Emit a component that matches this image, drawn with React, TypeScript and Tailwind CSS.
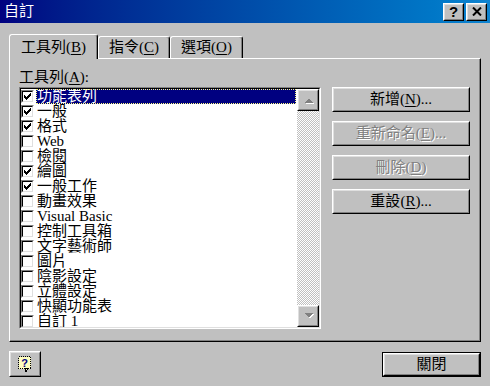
import type { ReactNode } from "react";

const items: [string, boolean][] = [
  ["功能表列", true],
  ["一般", true],
  ["格式", true],
  ["Web", false],
  ["檢閱", false],
  ["繪圖", true],
  ["一般工作", true],
  ["動畫效果", false],
  ["Visual Basic", false],
  ["控制工具箱", false],
  ["文字藝術師", false],
  ["圖片", false],
  ["陰影設定", false],
  ["立體設定", false],
  ["快顯功能表", false],
  ["自訂 1", false],
];

// classic raised bevel: two nested 1px frames
function Raised({ className = "", children }: { className?: string; children?: ReactNode }) {
  return (
    <div className={`border border-t-white border-l-white border-r-black border-b-black bg-[#c0c0c0] ${className}`}>
      <div className="flex h-full w-full items-center justify-center border border-t-[#dfdfdf] border-l-[#dfdfdf] border-r-[#808080] border-b-[#808080]">
        {children}
      </div>
    </div>
  );
}

function Check() {
  const px = [
    [6, 0], [5, 1], [6, 1], [0, 2], [4, 2], [5, 2], [6, 2], [0, 3], [1, 3], [3, 3], [4, 3], [5, 3],
    [0, 4], [1, 4], [2, 4], [3, 4], [4, 4], [1, 5], [2, 5], [3, 5], [2, 6],
  ];
  return (
    <svg width="7" height="7" viewBox="0 0 7 7" shapeRendering="crispEdges">
      {px.map(([x, y]) => (
        <rect key={`${x}-${y}`} x={x} y={y} width="1" height="1" fill="#000" />
      ))}
    </svg>
  );
}

function CheckBox({ on }: { on: boolean }) {
  return (
    <div className="size-[13px] shrink-0 border border-t-[#808080] border-l-[#808080] border-r-white border-b-white">
      <div className="flex h-full w-full items-center justify-center border border-t-black border-l-black border-r-[#dfdfdf] border-b-[#dfdfdf] bg-white">
        {on && <Check />}
      </div>
    </div>
  );
}

function Arrow({ up }: { up: boolean }) {
  return (
    <svg width="13" height="8" viewBox="0 0 13 8" shapeRendering="crispEdges">
      {up ? (
        <>
          <polygon points="2,7 6.5,2.5 11,7" fill="#fff" transform="translate(1,1)" />
          <polygon points="2,7 6.5,2.5 11,7" fill="#808080" />
        </>
      ) : (
        <>
          <polygon points="2,1 11,1 6.5,5.5" fill="#fff" transform="translate(1,1)" />
          <polygon points="2,1 11,1 6.5,5.5" fill="#808080" />
        </>
      )}
    </svg>
  );
}

function Mn({ c }: { c: string }) {
  return (
    <>
      (<span className="underline underline-offset-2">{c}</span>)
    </>
  );
}

export default function App() {
  return (
    <div className="flex h-[386px] w-[490px] flex-col overflow-hidden bg-[#c0c0c0] font-['Liberation_Serif','Noto_Sans_CJK_TC',serif] text-[15px] leading-[15px] text-black">
      {/* Title bar */}
      <div className="flex h-[23px] shrink-0 items-center justify-between bg-gradient-to-r from-[#000080] to-[#1084d0] pl-[4px] pr-[3px]">
        <span className="text-[15px] leading-[15px] text-white">自訂</span>
        <div className="flex gap-[2px]">
          <Raised className="h-[18px] w-[21px]">
            <span className="font-['Liberation_Sans'] text-[15px] leading-[14px] font-bold">?</span>
          </Raised>
          <Raised className="h-[18px] w-[21px]">
            <svg width="10" height="9" viewBox="0 0 10 9">
              <path d="M1 0.5 L9 8.5 M9 0.5 L1 8.5" stroke="#000" strokeWidth="2" />
            </svg>
          </Raised>
        </div>
      </div>

      <div className="flex flex-1 flex-col px-[9px] pt-[11px]">
        {/* Tabs */}
        <div className="flex h-[24px] items-end">
          <div className="relative z-10 -mb-[1px] flex h-[25px] w-[89px] items-start justify-center rounded-t-[3px] border border-b-0 border-t-white border-l-white border-r-black bg-[#c0c0c0] pt-[5px] shadow-[inset_-1px_0_#808080]">
            <span>
              工具列<Mn c="B" />
            </span>
          </div>
          <div className="flex h-[22px] w-[72px] items-start justify-center rounded-t-[3px] border border-b-0 border-t-white border-l-white border-r-black pt-[3px] shadow-[inset_-1px_0_#808080]">
            <span>
              指令<Mn c="C" />
            </span>
          </div>
          <div className="flex h-[22px] w-[73px] items-start justify-center rounded-t-[3px] border border-b-0 border-t-white border-l-white border-r-black pt-[3px] shadow-[inset_-1px_0_#808080]">
            <span>
              選項<Mn c="O" />
            </span>
          </div>
        </div>

        {/* Panel */}
        <div className="flex h-[284px] gap-[11px] border border-t-white border-l-white border-r-black border-b-black pl-[9px] pt-[11px] shadow-[inset_-1px_-1px_#808080]">
          <div className="flex w-[302px] flex-col">
            <div className="h-[15px]">
              工具列<Mn c="A" />:
            </div>
            <div className="mt-[2px] h-[242px] border border-t-[#808080] border-l-[#808080] border-r-white border-b-white">
              <div className="flex h-full border border-t-black border-l-black border-r-[#dfdfdf] border-b-[#dfdfdf] bg-white">
                <div className="flex flex-1 flex-col overflow-hidden">
                  {items.map(([label, on], i) => (
                    <div key={label} className="flex h-[15px] shrink-0 items-center gap-[2px]">
                      <CheckBox on={on} />
                      {i === 0 ? (
                        <div className="mr-[1px] h-[15px] flex-1 bg-[#000080] px-[1px] whitespace-nowrap text-white outline-1 -outline-offset-1 outline-[#ffff80] outline-dotted">
                          {label}
                        </div>
                      ) : (
                        <div className="px-[1px] whitespace-nowrap">{label}</div>
                      )}
                    </div>
                  ))}
                </div>
                <div className="flex w-[22px] flex-col bg-[repeating-conic-gradient(#c0c0c0_0_25%,#fff_0_50%)] bg-[length:2px_2px]">
                  <Raised className="h-[22px] w-[22px]">
                    <Arrow up />
                  </Raised>
                  <div className="flex-1" />
                  <Raised className="h-[22px] w-[22px]">
                    <Arrow up={false} />
                  </Raised>
                </div>
              </div>
            </div>
          </div>

          <div className="mt-[17px] flex w-[138px] flex-col gap-[9px]">
            <Raised className="h-[25px]">
              <span>
                新增<Mn c="N" />...
              </span>
            </Raised>
            <Raised className="h-[25px]">
              <span className="text-[#808080] [text-shadow:1px_1px_0_#fff]">
                重新命名<Mn c="E" />...
              </span>
            </Raised>
            <Raised className="h-[25px]">
              <span className="text-[#808080] [text-shadow:1px_1px_0_#fff]">
                刪除<Mn c="D" />
              </span>
            </Raised>
            <Raised className="h-[25px]">
              <span>
                重設<Mn c="R" />...
              </span>
            </Raised>
          </div>
        </div>

        {/* Footer */}
        <div className="mt-[9px] flex items-start justify-between">
          <Raised className="h-[26px] w-[32px]">
            <svg width="14" height="16" viewBox="0 0 14 16" shapeRendering="crispEdges">
              <rect x="0.5" y="0.5" width="12" height="12" fill="#ffffc0" stroke="#000" strokeDasharray="1 1" />
              <path d="M7 12.5 L8 15.5 L10 12.5" fill="#ffffc0" stroke="#000" strokeWidth="1" />
              <text x="6.5" y="10.5" textAnchor="middle" fontSize="11" fontWeight="bold" fontFamily="Liberation Sans, sans-serif" fill="#000080">
                ?
              </text>
            </svg>
          </Raised>
          <div className="mt-[1px] border border-black">
            <Raised className="h-[23px] w-[97px]">
              <span>關閉</span>
            </Raised>
          </div>
        </div>
      </div>
    </div>
  );
}
